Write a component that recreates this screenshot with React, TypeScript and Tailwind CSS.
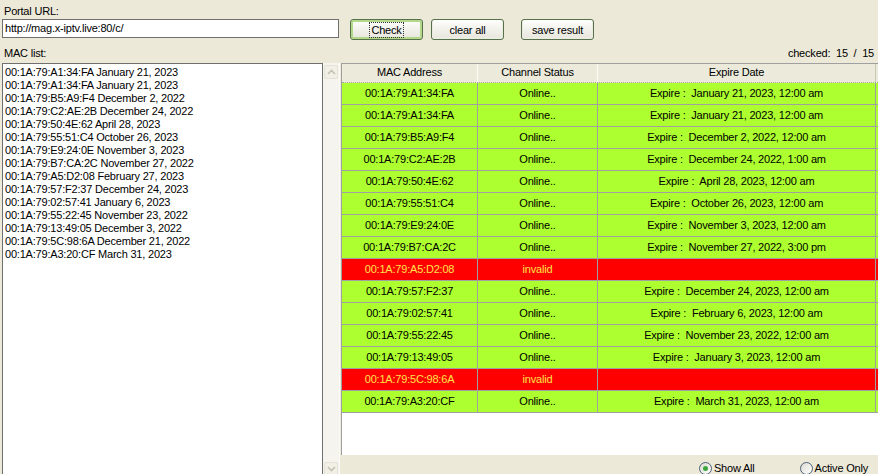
import React from 'react';

const macList = [
  '00:1A:79:A1:34:FA January 21, 2023',
  '00:1A:79:A1:34:FA January 21, 2023',
  '00:1A:79:B5:A9:F4 December 2, 2022',
  '00:1A:79:C2:AE:2B December 24, 2022',
  '00:1A:79:50:4E:62 April 28, 2023',
  '00:1A:79:55:51:C4 October 26, 2023',
  '00:1A:79:E9:24:0E November 3, 2023',
  '00:1A:79:B7:CA:2C November 27, 2022',
  '00:1A:79:A5:D2:08 February 27, 2023',
  '00:1A:79:57:F2:37 December 24, 2023',
  '00:1A:79:02:57:41 January 6, 2023',
  '00:1A:79:55:22:45 November 23, 2022',
  '00:1A:79:13:49:05 December 3, 2022',
  '00:1A:79:5C:98:6A December 21, 2022',
  '00:1A:79:A3:20:CF March 31, 2023',
];

type Row = { mac: string; expire?: string };

const rows: Row[] = [
  { mac: '00:1A:79:A1:34:FA', expire: 'January 21, 2023, 12:00 am' },
  { mac: '00:1A:79:A1:34:FA', expire: 'January 21, 2023, 12:00 am' },
  { mac: '00:1A:79:B5:A9:F4', expire: 'December 2, 2022, 12:00 am' },
  { mac: '00:1A:79:C2:AE:2B', expire: 'December 24, 2022, 1:00 am' },
  { mac: '00:1A:79:50:4E:62', expire: 'April 28, 2023, 12:00 am' },
  { mac: '00:1A:79:55:51:C4', expire: 'October 26, 2023, 12:00 am' },
  { mac: '00:1A:79:E9:24:0E', expire: 'November 3, 2023, 12:00 am' },
  { mac: '00:1A:79:B7:CA:2C', expire: 'November 27, 2022, 3:00 pm' },
  { mac: '00:1A:79:A5:D2:08' },
  { mac: '00:1A:79:57:F2:37', expire: 'December 24, 2023, 12:00 am' },
  { mac: '00:1A:79:02:57:41', expire: 'February 6, 2023, 12:00 am' },
  { mac: '00:1A:79:55:22:45', expire: 'November 23, 2022, 12:00 am' },
  { mac: '00:1A:79:13:49:05', expire: 'January 3, 2023, 12:00 am' },
  { mac: '00:1A:79:5C:98:6A' },
  { mac: '00:1A:79:A3:20:CF', expire: 'March 31, 2023, 12:00 am' },
];

function XpButton({ label, focused, className }: { label: string; focused?: boolean; className?: string }) {
  return (
    <div
      className={`h-[21px] w-[73px] rounded-[3px] border border-[#55704a] bg-linear-to-b from-[#fefefc] to-[#e6e5dc] flex items-center justify-center ${
        focused ? 'shadow-[inset_0_0_0_2px_#b3d889]' : 'shadow-[inset_0_-1px_0_1px_#ecebe2]'
      } ${className ?? ''}`}
    >
      {focused ? (
        <span className="border border-dotted border-[#333] px-[1px] leading-[14px]">{label}</span>
      ) : (
        <span className="leading-[14px]">{label}</span>
      )}
    </div>
  );
}

function Chevron({ up }: { up?: boolean }) {
  return (
    <svg width="9" height="6" viewBox="0 0 9 6">
      <path
        d={up ? 'M1 5 L4.5 1.5 L8 5' : 'M1 1 L4.5 4.5 L8 1'}
        fill="none"
        stroke="#c4c2b2"
        strokeWidth="1.6"
      />
    </svg>
  );
}

function Radio({ label, checked, className }: { label: string; checked?: boolean; className?: string }) {
  return (
    <div className={`flex items-center ${className ?? ''}`}>
      <div className="w-[13px] h-[13px] rounded-full border border-[#4d6078] bg-linear-to-br from-[#dcdcd4] to-white flex items-center justify-center">
        {checked && <div className="w-[5px] h-[5px] rounded-full bg-[#3da53d]" />}
      </div>
      <span className="ml-[2px] leading-[13px]">{label}</span>
    </div>
  );
}

export default function App() {
  return (
    <div className="w-[878px] h-[474px] overflow-hidden bg-[#ECE9D8] text-[11px] text-black tracking-[-0.2px] font-['Liberation_Sans',Arial,sans-serif]">
      <div className="pl-[4px] pt-[5px] leading-[13px]">Portal URL:</div>

      <div className="flex items-start pl-[2px] mt-[1px] h-[22px]">
        <div className="w-[337px] h-[19px] border border-[#6f6f6f] bg-white pl-[2px] leading-[16px] whitespace-nowrap">
          http://mag.x-iptv.live:80/c/
        </div>
        <XpButton label="Check" focused className="ml-[11px]" />
        <XpButton label="clear all" className="ml-[8px]" />
        <XpButton label="save result" className="ml-[17px]" />
      </div>

      <div className="flex justify-between pl-[4px] pr-[4px] pt-[6px] h-[22px] leading-[13px]">
        <span>MAC list:</span>
        <span className="whitespace-pre">checked:  15  /  15</span>
      </div>

      <div className="flex h-[412px]">
        {/* MAC list text box */}
        <div className="ml-[2px] w-[321px] h-full border-l border-r border-t border-[#6f6f6f] bg-white pl-[2px] pt-[2px] leading-[13px] whitespace-nowrap">
          {macList.map((line, i) => (
            <div key={i}>{line}</div>
          ))}
        </div>
        <div className="w-[17px] h-full bg-[#f5f4ee] flex flex-col justify-between items-center pt-[2px] border-r border-[#fbfaf6]">
          <div className="w-[14px] h-[14px] rounded-[2px] border border-[#e4e2d6] bg-[#f1efe6] flex items-center justify-center">
            <Chevron up />
          </div>
          <div className="w-[14px] h-[14px] rounded-[2px] border border-[#e4e2d6] bg-[#f1efe6] flex items-center justify-center mb-[-1px]">
            <Chevron />
          </div>
        </div>

        {/* results grid */}
        <div className="ml-[1px] flex-1 flex flex-col">
          <div className="h-[393px] bg-white border-t border-l border-[#a0a0a0]">
            <div className="flex h-[19px] bg-[#ebeadb] border-b border-dotted border-[#a9a89a] leading-[17px] text-center">
              <div className="w-[136px] border-r border-[#fdfdf8]">MAC Address</div>
              <div className="w-[120px] border-r border-[#fdfdf8]">Channel Status</div>
              <div className="w-[278px] border-r border-[#c9c7b8]">Expire Date</div>
            </div>
            {rows.map((r, i) => {
              const bad = !r.expire;
              return (
                <div
                  key={i}
                  className={`flex h-[22px] border-b border-[#a0a0a0] leading-[21px] text-center whitespace-pre ${
                    bad ? 'bg-[#ff0000] text-[#ffe34a]' : 'bg-[#adff2f] text-black'
                  }`}
                >
                  <div className="w-[136px] border-r border-[#a0a0a0]">{r.mac}</div>
                  <div className="w-[120px] border-r border-[#a0a0a0]">{bad ? 'invalid' : 'Online..'}</div>
                  <div className="w-[278px] border-r border-[#a0a0a0] text-black">
                    {r.expire ? `Expire :  ${r.expire}` : ''}
                  </div>
                </div>
              );
            })}
          </div>
          <div className="flex-1 flex justify-end pr-[10px] pt-[7px]">
            <Radio label="Show All" checked />
            <Radio label="Active Only" className="ml-[45px]" />
          </div>
        </div>
      </div>
    </div>
  );
}
